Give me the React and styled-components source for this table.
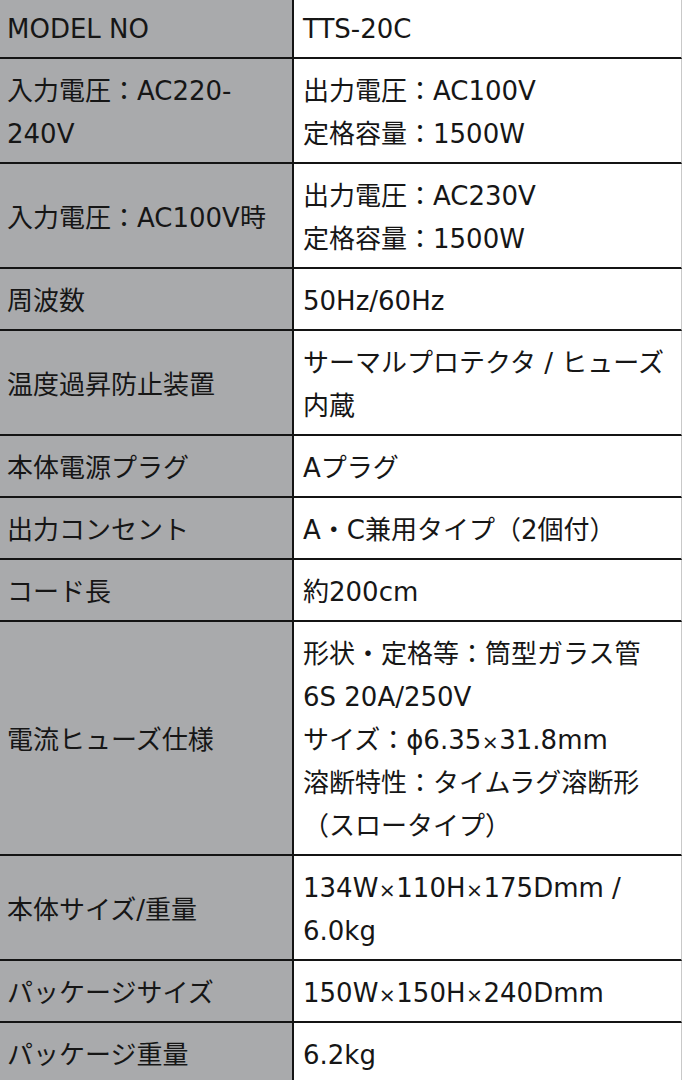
import React from "react";
import styled, { createGlobalStyle } from "styled-components";

const GlobalStyle = createGlobalStyle`
  html, body {
    margin: 0;
    padding: 0;
    background: #ffffff;
  }
  body {
    font-family: "DejaVu Sans", "Noto Sans CJK JP", sans-serif;
    color: #161616;
    overflow: hidden;
  }
`;

const Table = styled.div`
  display: flex;
  flex-direction: column;
  width: 682px;
  margin-top: -3px;
`;

const Row = styled.div`
  display: grid;
  grid-template-columns: 292px 1fr;
`;

const Label = styled.div`
  display: flex;
  align-items: center;
  background: #a9aaac;
  padding: 11px 6px 6px 7px;
  border-bottom: 2px solid #141414;
  font-size: 26px;
  line-height: 43px;
`;

const Value = styled.div`
  background: #ffffff;
  padding: 11px 6px 6px 9px;
  border-left: 2px solid #141414;
  border-right: 1px solid #c9c9c9;
  border-bottom: 2px solid #141414;
  font-size: 26px;
  line-height: 43px;
`;

const Line = styled.div`
  white-space: nowrap;
  height: 43px;
`;

const Times = styled.span`
  font-size: 0.78em;
  line-height: 1;
  margin: 0 0.5px;
`;

const renderText = (t) => {
  const parts = t.split("×");
  return parts.map((p, i) => (
    <React.Fragment key={i}>
      {i > 0 && <Times>×</Times>}
      {p}
    </React.Fragment>
  ));
};

const rows = [
  { label: ["MODEL NO"], value: ["TTS-20C"] },
  { label: ["入力電圧：AC220-", "240V"], value: ["出力電圧：AC100V", "定格容量：1500W"] },
  { label: ["入力電圧：AC100V時"], value: ["出力電圧：AC230V", "定格容量：1500W"] },
  { label: ["周波数"], value: ["50Hz/60Hz"] },
  { label: ["温度過昇防止装置"], value: ["サーマルプロテクタ / ヒューズ", "内蔵"] },
  { label: ["本体電源プラグ"], value: ["Aプラグ"] },
  { label: ["出力コンセント"], value: ["A・C兼用タイプ（2個付）"] },
  { label: ["コード長"], value: ["約200cm"] },
  {
    label: ["電流ヒューズ仕様"],
    value: [
      "形状・定格等：筒型ガラス管",
      "6S 20A/250V",
      "サイズ：ϕ6.35×31.8mm",
      "溶断特性：タイムラグ溶断形",
      "（スロータイプ）",
    ],
  },
  { label: ["本体サイズ/重量"], value: ["134W×110H×175Dmm /", "6.0kg"] },
  { label: ["パッケージサイズ"], value: ["150W×150H×240Dmm"] },
  { label: ["パッケージ重量"], value: ["6.2kg"] },
];

export default function App() {
  return (
    <>
      <GlobalStyle />
      <Table>
        {rows.map((r, i) => (
          <Row key={i}>
            <Label>
              <div>
                {r.label.map((t, j) => (
                  <Line key={j}>{renderText(t)}</Line>
                ))}
              </div>
            </Label>
            <Value>
              {r.value.map((t, j) => (
                <Line key={j}>{renderText(t)}</Line>
              ))}
            </Value>
          </Row>
        ))}
      </Table>
    </>
  );
}
